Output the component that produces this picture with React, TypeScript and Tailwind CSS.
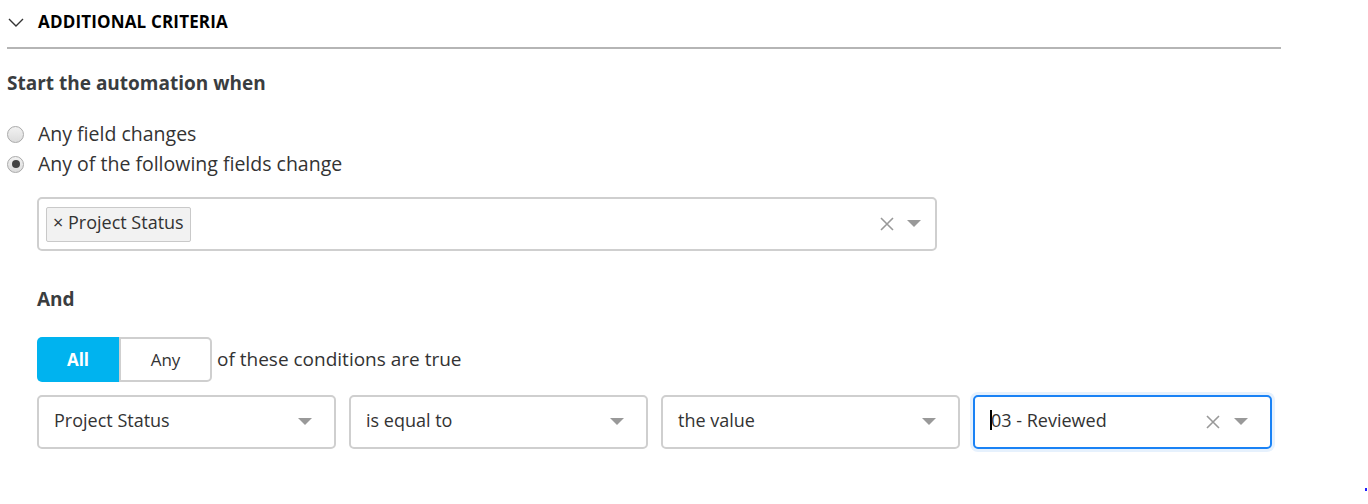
import React from "react";

const Caret = () => (
  <svg width="14" height="8" viewBox="0 0 14 8" className="shrink-0">
    <path d="M0 0 L14 0 L7 7 Z" fill="#999999" />
  </svg>
);

const Clear = () => (
  <svg width="14" height="14" viewBox="0 0 14 14" className="shrink-0">
    <path d="M1 1 L13 13 M13 1 L1 13" stroke="#999999" strokeWidth="1.6" />
  </svg>
);

const Radio = ({ checked }: { checked?: boolean }) => (
  <span className="w-[17px] h-[17px] rounded-full border border-[#a9a9a9] bg-gradient-to-b from-[#f2f2f2] to-[#dcdcdc] flex items-center justify-center shrink-0">
    {checked && <span className="w-[8px] h-[8px] rounded-full bg-[#444444]" />}
  </span>
);

const Select = ({ label, clearable, focused, cursor }: { label: string; clearable?: boolean; focused?: boolean; cursor?: boolean }) => (
  <div
    className={
      "w-[299px] h-[54px] rounded-[5px] flex items-center pl-[15px] pr-[22px] bg-white " +
      (focused
        ? "border-2 border-[#1a82f5] shadow-[0_0_0_3px_#e6f1fd] pl-[14px]"
        : "border-2 border-[#cfcfcf]")
    }
  >
    <span className="flex-1 text-[18px] text-[#333333] flex items-center pb-[4px]">
      {cursor && <span className="w-[2px] h-[20px] bg-black mr-[-1px]" />}
      {label}
    </span>
    {clearable && (
      <span className="mr-[14px] flex items-center">
        <Clear />
      </span>
    )}
    <Caret />
  </div>
);

export default function App() {
  return (
    <div className="relative w-[1368px] h-[504px] bg-white overflow-hidden" style={{ fontFamily: "'Open Sans', Lato, sans-serif" }}>
      <div className="w-[1274px] ml-[7px]">
        <div className="flex items-center h-[49px] pb-[3px] border-b-2 border-[#b5b5b5]">
          <svg width="16" height="10" viewBox="0 0 16 10" className="ml-[1px] mt-[2px]">
            <path d="M1 1 L8 8 L15 1" stroke="#333" strokeWidth="1.4" fill="none" />
          </svg>
          <span className="ml-[14px] text-[17px] font-bold text-black tracking-[0.01em]">ADDITIONAL CRITERIA</span>
        </div>
      </div>
      <div className="pl-[7px]">
        <div className="mt-[22px] text-[19px] font-bold text-[#3a3d3f] leading-[24px]">Start the automation when</div>
        <div className="mt-[27px] flex items-center gap-[14px] h-[24px]">
          <Radio />
          <span className="text-[19.5px] text-[#333333]">Any field changes</span>
        </div>
        <div className="mt-[6px] flex items-center gap-[14px] h-[24px]">
          <Radio checked />
          <span className="text-[19.5px] text-[#333333]">Any of the following fields change</span>
        </div>
      </div>
      <div className="pl-[37px]">
        <div className="mt-[21px] w-[900px] h-[54px] border-2 border-[#cfcfcf] rounded-[5px] flex items-center pl-[7px] pr-[14px]">
          <div className="h-[35px] px-[6px] pb-[3px] flex items-center bg-[#f2f2f2] border border-[#c9c9c9] rounded-[2px] text-[18px] text-[#333333]">
            × Project Status
          </div>
          <div className="flex-1" />
          <span className="mr-[13px] flex items-center"><Clear /></span>
          <Caret />
        </div>
        <div className="mt-[36px] text-[19px] font-bold text-[#3a3d3f] leading-[24px]">And</div>
        <div className="mt-[26px] flex items-center">
          <div className="flex h-[45px]">
            <div className="w-[82px] bg-[#00b3ef] rounded-l-[5px] text-white font-bold text-[17px] flex items-center justify-center">All</div>
            <div className="w-[93px] border-2 border-[#cfcfcf] rounded-r-[5px] text-[17px] text-[#333333] flex items-center justify-center">Any</div>
          </div>
          <span className="ml-[5px] text-[19px] text-[#333333]">of these conditions are true</span>
        </div>
        <div className="mt-[13px] flex gap-[13px]">
          <Select label="Project Status" />
          <Select label="is equal to" />
          <Select label="the value" />
          <Select label="03 - Reviewed" clearable focused cursor />
        </div>
      </div>
      <span className="absolute left-[1365px] top-[488px] w-[2px] h-[3px] bg-[#2020ff]" />
    </div>
  );
}
